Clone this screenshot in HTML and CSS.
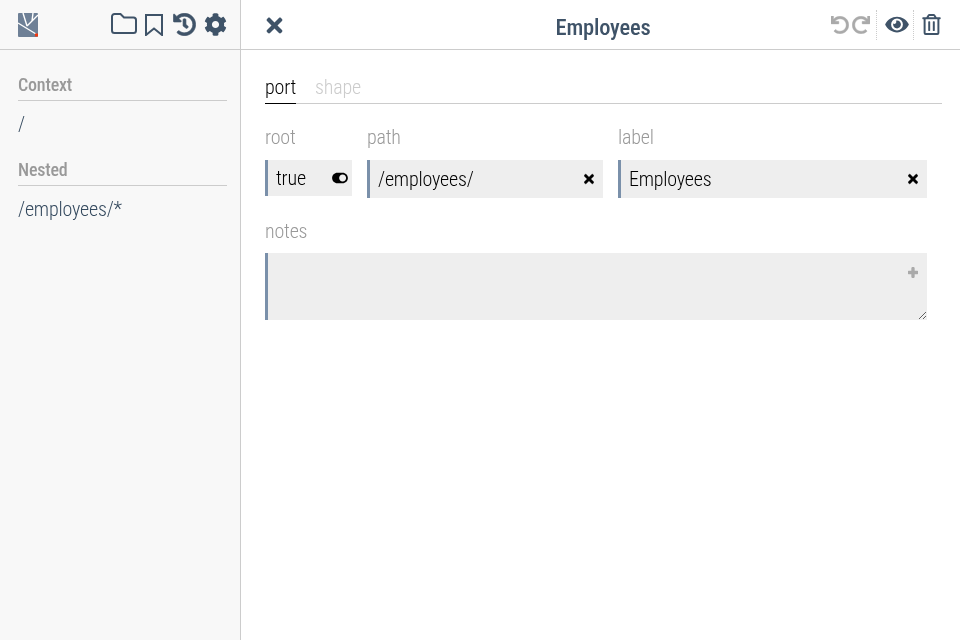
FILE: index.html
```html
<!DOCTYPE html>
<html lang="en">
<head>
    <meta charset="UTF-8">
    <meta name="viewport" content="width=device-width, initial-scale=1.0">
    <title>Employees</title>
    <link rel="stylesheet" href="styles.css">
</head>
<body>
    <div class="app">
        <aside class="sidebar">
            <div class="side-head">
                <svg class="logo" viewBox="0 0 20 24">
                    <rect width="20" height="24" rx="1" fill="#6e8096"/>
                    <path d="M0 10 L18 21 M5 0 L9 13 M9 13 L20 2 M14 8 L15 0" fill="none" stroke="#fff" stroke-width="1.4"/>
                    <rect x="17" y="20.500" width="3" height="3" fill="#f0380f"/>
                </svg>
                <div class="side-icons">
                    <svg class="ico folder" viewBox="0 0 26 21"><path d="M3.5 1H9.5L13 4.5H22.5A2.5 2.5 0 0 1 25 7V17.5A2.500 2.500 0 0 1 22.500 20H3.500A2.500 2.500 0 0 1 1 17.500V3.500A2.500 2.500 0 0 1 3.500 1Z" fill="none" stroke="#3f5368" stroke-width="2"/></svg>
                    <svg class="ico bookmark" viewBox="0 0 18 22"><path d="M1 1H17V21L9 14.500L1 21Z" fill="none" stroke="#3f5368" stroke-width="2"/></svg>
                    <svg class="ico history" viewBox="0 0 512 512"><path fill="#3f5368" stroke="#3f5368" stroke-width="14" d="M504 255.531c.253 136.64-111.18 248.372-247.82 248.468-59.015.042-113.223-20.53-155.822-54.911-11.077-8.94-11.905-25.541-1.839-35.607l11.267-11.267c8.609-8.609 22.353-9.551 31.891-1.984C173.062 425.135 212.781 440 256 440c101.705 0 184-82.311 184-184 0-101.705-82.311-184-184-184-48.814 0-93.149 18.969-126.068 49.932l50.754 50.754c10.08 10.08 2.941 27.314-11.313 27.314H24c-8.837 0-16-7.163-16-16V38.627c0-14.254 17.234-21.393 27.314-11.314l49.372 49.372C129.209 34.136 189.552 8 256 8c136.81 0 247.747 110.78 248 247.531zm-180.912 78.784l9.823-12.63c8.138-10.463 6.253-25.542-4.21-33.679L288 256.349V152c0-13.255-10.745-24-24-24h-16c-13.255 0-24 10.745-24 24v135.651l65.409 50.874c10.463 8.137 25.541 6.253 33.679-4.21z"/></svg>
                    <svg class="ico gear" viewBox="0 0 512 512"><path fill="#3f5368" d="M487.4 315.7l-42.6-24.6c4.3-23.2 4.3-47 0-70.2l42.6-24.6c4.9-2.8 7.1-8.6 5.5-14-11.1-35.6-30-67.8-54.7-94.6-3.8-4.1-10-5.1-14.8-2.3L380.800 110c-17.900-15.400-38.500-27.300-60.800-35.100V25.800c0-5.600-3.900-10.500-9.400-11.700-36.700-8.200-74.300-7.800-109.200 0-5.500 1.200-9.400 6.100-9.400 11.700V75c-22.200 7.900-42.800 19.800-60.800 35.100L88.700 85.500c-4.900-2.800-11-1.900-14.800 2.300-24.700 26.700-43.600 58.900-54.700 94.600-1.700 5.400.6 11.200 5.500 14L67.300 221c-4.300 23.200-4.300 47 0 70.200l-42.600 24.600c-4.900 2.800-7.100 8.600-5.500 14 11.100 35.600 30 67.800 54.700 94.600 3.800 4.100 10 5.100 14.800 2.300l42.600-24.600c17.900 15.400 38.500 27.300 60.800 35.100v49.200c0 5.600 3.900 10.500 9.400 11.700 36.700 8.200 74.300 7.800 109.200 0 5.500-1.200 9.400-6.100 9.400-11.700v-49.200c22.200-7.900 42.800-19.800 60.800-35.100l42.600 24.600c4.900 2.800 11 1.900 14.800-2.300 24.700-26.700 43.600-58.900 54.700-94.600 1.500-5.500-.7-11.300-5.600-14.100zM256 336c-44.100 0-80-35.900-80-80s35.900-80 80-80 80 35.900 80 80-35.900 80-80 80z"/></svg>
                </div>
            </div>
            <div class="side-body">
                <h3 class="side-title">Context</h3>
                <div class="side-link">/</div>
                <h3 class="side-title">Nested</h3>
                <div class="side-link">/employees/*</div>
            </div>
        </aside>
        <main class="main">
            <header class="main-head">
                <svg class="ico close" viewBox="0 0 352 512"><path fill="#3f5368" d="M242.72 256l100.07-100.07c12.28-12.28 12.28-32.19 0-44.48l-22.24-22.24c-12.28-12.28-32.19-12.28-44.48 0L176 189.28 75.93 89.21c-12.28-12.28-32.19-12.28-44.48 0L9.21 111.45c-12.28 12.28-12.28 32.19 0 44.48L109.28 256 9.21 356.07c-12.28 12.28-12.28 32.19 0 44.48l22.24 22.24c12.28 12.28 32.2 12.28 44.48 0L176 322.72l100.07 100.07c12.28 12.28 32.2 12.28 44.48 0l22.24-22.24c12.28-12.28 12.28-32.19 0-44.48L242.72 256z"/></svg>
                <h1 class="title">Employees</h1>
                <div class="head-tools">
                    <div class="tool-group">
                        <svg class="ico undo" viewBox="0 0 512 512"><path fill="#aaa" stroke="#aaa" stroke-width="12" d="M212.333 224.333H12c-6.627 0-12-5.373-12-12V12C0 5.373 5.373 0 12 0h48c6.627 0 12 5.373 12 12v78.112C117.773 39.279 184.26 7.47 258.175 8.007c136.906.994 246.448 111.623 246.157 248.532C504.041 393.258 393.12 504 256.333 504c-64.089 0-122.496-24.313-166.51-64.215-5.099-4.622-5.334-12.554-.467-17.42l33.967-33.967c4.474-4.474 11.662-4.717 16.401-.525C170.8 415.336 211.6 432 256.333 432c97.268 0 176-78.716 176-176 0-97.267-78.716-176-176-176-58.496 0-110.28 28.476-142.274 72.333h98.274c6.627 0 12 5.373 12 12v48c0 6.627-5.373 12-12 12z"/></svg>
                        <svg class="ico undo redo" viewBox="0 0 512 512"><path fill="#aaa" stroke="#aaa" stroke-width="12" d="M212.333 224.333H12c-6.627 0-12-5.373-12-12V12C0 5.373 5.373 0 12 0h48c6.627 0 12 5.373 12 12v78.112C117.773 39.279 184.26 7.47 258.175 8.007c136.906.994 246.448 111.623 246.157 248.532C504.041 393.258 393.12 504 256.333 504c-64.089 0-122.496-24.313-166.51-64.215-5.099-4.622-5.334-12.554-.467-17.42l33.967-33.967c4.474-4.474 11.662-4.717 16.401-.525C170.8 415.336 211.6 432 256.333 432c97.268 0 176-78.716 176-176 0-97.267-78.716-176-176-176-58.496 0-110.28 28.476-142.274 72.333h98.274c6.627 0 12 5.373 12 12v48c0 6.627-5.373 12-12 12z"/></svg>
                    </div>
                    <div class="tool-group eye-group">
                        <svg class="ico eye" viewBox="0 0 576 512"><path fill="#3f5368" d="M572.52 241.4C518.29 135.59 410.93 64 288 64S57.68 135.64 3.48 241.41a32.35 32.35 0 0 0 0 29.19C57.71 376.41 165.07 448 288 448s230.32-71.64 284.52-177.41a32.35 32.35 0 0 0 0-29.19zM288 400a144 144 0 1 1 144-144 143.93 143.93 0 0 1-144 144zm0-240a95.31 95.31 0 0 0-25.31 3.79 47.85 47.85 0 0 1-66.9 66.9A95.78 95.78 0 1 0 288 160z"/></svg>
                    </div>
                    <svg class="ico trash" viewBox="0 0 448 512"><path fill="#3f5368" d="M268 416h24a12 12 0 0 0 12-12V188a12 12 0 0 0-12-12h-24a12 12 0 0 0-12 12v216a12 12 0 0 0 12 12zM432 80h-82.41l-34-56.7A48 48 0 0 0 274.41 0H173.59a48 48 0 0 0-41.16 23.3L98.41 80H16A16 16 0 0 0 0 96v16a16 16 0 0 0 16 16h16v336a48 48 0 0 0 48 48h288a48 48 0 0 0 48-48V128h16a16 16 0 0 0 16-16V96a16 16 0 0 0-16-16zM171.84 50.91A6 6 0 0 1 177 48h94a6 6 0 0 1 5.15 2.91L293.61 80H154.39zM368 464H80V128h288zm-212-48h24a12 12 0 0 0 12-12V188a12 12 0 0 0-12-12h-24a12 12 0 0 0-12 12v216a12 12 0 0 0 12 12z"/></svg>
                </div>
            </header>
            <div class="content">
                <div class="tabs">
                    <span class="tab active">port</span>
                    <span class="tab">shape</span>
                </div>
                <div class="row">
                    <div class="field">
                        <label class="field-label">root</label>
                        <div class="input-box short">
                            <span class="value">true</span>
                            <svg class="toggle" viewBox="0 0 576 512"><path fill="#000" d="M384 64H192C86 64 0 150 0 256s86 192 192 192h192c106 0 192-86 192-192S490 64 384 64zm0 320c-70.800 0-128-57.300-128-128 0-70.800 57.300-128 128-128 70.800 0 128 57.300 128 128 0 70.800-57.300 128-128 128z"/></svg>
                        </div>
                    </div>
                    <div class="field">
                        <label class="field-label">path</label>
                        <div class="input-box">
                            <span class="value">/employees/</span>
                            <svg class="clear" viewBox="0 0 352 512"><path fill="#000" stroke="#000" stroke-width="15" d="M242.72 256l100.07-100.07c12.28-12.28 12.28-32.19 0-44.48l-22.24-22.24c-12.28-12.28-32.19-12.28-44.48 0L176 189.28 75.93 89.21c-12.28-12.28-32.19-12.28-44.48 0L9.21 111.45c-12.28 12.28-12.28 32.19 0 44.48L109.28 256 9.21 356.07c-12.28 12.28-12.28 32.19 0 44.48l22.24 22.24c12.28 12.28 32.2 12.28 44.48 0L176 322.72l100.07 100.07c12.28 12.28 32.2 12.28 44.48 0l22.24-22.24c12.28-12.28 12.28-32.19 0-44.48L242.72 256z"/></svg>
                        </div>
                    </div>
                    <div class="field">
                        <label class="field-label">label</label>
                        <div class="input-box">
                            <span class="value">Employees</span>
                            <svg class="clear" viewBox="0 0 352 512"><path fill="#000" stroke="#000" stroke-width="15" d="M242.72 256l100.07-100.07c12.28-12.28 12.28-32.19 0-44.48l-22.24-22.24c-12.28-12.28-32.19-12.28-44.48 0L176 189.28 75.93 89.21c-12.28-12.28-32.19-12.28-44.48 0L9.21 111.45c-12.28 12.28-12.28 32.19 0 44.48L109.28 256 9.21 356.07c-12.28 12.28-12.28 32.19 0 44.48l22.24 22.24c12.28 12.28 32.2 12.28 44.48 0L176 322.72l100.07 100.07c12.28 12.28 32.2 12.28 44.48 0l22.24-22.24c12.28-12.28 12.28-32.19 0-44.48L242.72 256z"/></svg>
                        </div>
                    </div>
                </div>
                <div class="notes">
                    <label class="field-label">notes</label>
                    <div class="notes-wrap">
                        <textarea class="notes-area"></textarea>
                        <svg class="plus" viewBox="0 0 448 512"><path fill="#aaa" stroke="#aaa" stroke-width="50" d="M416 208H272V64c0-17.670-14.330-32-32-32h-32c-17.670 0-32 14.330-32 32v144H32c-17.670 0-32 14.330-32 32v32c0 17.670 14.330 32 32 32h144v144c0 17.670 14.330 32 32 32h32c17.670 0 32-14.330 32-32V304h144c17.670 0 32-14.330 32-32v-32c0-17.670-14.330-32-32-32z"/></svg>
                    </div>
                </div>
            </div>
        </main>
    </div>
</body>
</html>
```

FILE: styles.css
```css
* {
    box-sizing: border-box;
}

body {
    margin: 0;
    font-family: Roboto, sans-serif;
    font-stretch: condensed;
    font-weight: 300;
    letter-spacing: -0.2px;
    background-color: #fff;
}

.app {
    display: flex;
    width: 960px;
    height: 640px;
    overflow: hidden;
    will-change: transform;
}

.sidebar {
    width: 241px;
    flex-shrink: 0;
    background-color: #f8f8f8;
    border-right: 1px solid #ccc;
}

.side-head {
    display: flex;
    align-items: center;
    justify-content: space-between;
    height: 50px;
    padding: 0 13px 0 18px;
    border-bottom: 1px solid #ccc;
}

.logo {
    width: 20px;
    height: 24px;
}

.side-icons {
    display: flex;
    align-items: center;
    gap: 8px;
}

.ico {
    display: block;
}

.folder {
    width: 26px;
    height: 21px;
    margin-bottom: 2px;
}

.bookmark {
    width: 18px;
    height: 22px;
    margin-right: 2px;
}

.history {
    width: 23px;
    height: 23px;
}

.gear {
    width: 23px;
    height: 23px;
}

.side-body {
    padding: 24px 13px 0 18px;
}

.side-title {
    margin: 0;
    padding-bottom: 4px;
    font-size: 18px;
    line-height: 22px;
    font-weight: 500;
    color: #999;
    border-bottom: 1px solid #ccc;
}

.side-link {
    margin: 11px 0 23px;
    font-size: 20px;
    line-height: 24px;
    color: #34495e;
}

.main {
    flex: 1;
}

.main-head {
    display: grid;
    grid-template-columns: 1fr auto 1fr;
    align-items: center;
    height: 50px;
    padding: 0 19px 0 24px;
    border-bottom: 1px solid #ccc;
}

.close {
    width: 17px;
    height: 23px;
    margin: 2px 0 0 1px;
}

.title {
    margin: 4px 0 0;
    font-size: 22.5px;
    font-weight: 500;
    text-align: center;
    color: #3f5368;
}

.head-tools {
    display: flex;
    align-items: center;
    justify-self: end;
}

.tool-group {
    display: flex;
    align-items: center;
    height: 30px;
    gap: 3px;
}

.eye-group {
    padding: 0 4px 0 8px;
    margin-left: 6px;
    border-left: 1px dotted #ccc;
    border-right: 1px dotted #ccc;
}

.undo {
    width: 18px;
    height: 18px;
}

.redo {
    transform: scaleX(-1);
}

.eye {
    width: 24px;
    height: 21px;
}

.trash {
    width: 19px;
    height: 21px;
    margin-left: 8px;
}

.content {
    padding: 23px 18px 0 24px;
}

.tabs {
    display: flex;
    gap: 19px;
    border-bottom: 1px solid #ccc;
    height: 31px;
}

.tab {
    font-size: 20px;
    line-height: 28px;
    height: 31px;
    color: #ccc;
}

.tab.active {
    color: #000;
    border-bottom: 1px solid #000;
}

.row {
    display: grid;
    grid-template-columns: 87px 236px 309px;
    gap: 15px;
    margin-top: 20px;
    align-items: start;
}

.field-label {
    display: block;
    font-size: 20px;
    line-height: 26px;
    color: #999;
}

.input-box {
    display: flex;
    align-items: center;
    justify-content: space-between;
    height: 38px;
    margin-top: 10px;
    padding: 0 9px 0 8px;
    background-color: #eee;
    border-left: 3px solid #7a90aa;
    font-size: 20px;
    color: #000;
}

.input-box.short {
    height: 36px;
    padding-right: 4px;
}

.toggle {
    width: 16px;
    height: 14px;
}

.clear {
    width: 10px;
    height: 14px;
}

.notes {
    margin-top: 20px;
}

.notes-wrap {
    position: relative;
    width: 662px;
    margin-top: 9px;
}

.notes-area {
    display: block;
    width: 662px;
    height: 67px;
    margin: 0;
    padding: 8px;
    background-color: #eee;
    border: none;
    border-left: 3px solid #7a90aa;
    border-radius: 0;
    outline: none;
}

.plus {
    position: absolute;
    top: 13px;
    right: 9px;
    width: 10px;
    height: 13px;
}
```
